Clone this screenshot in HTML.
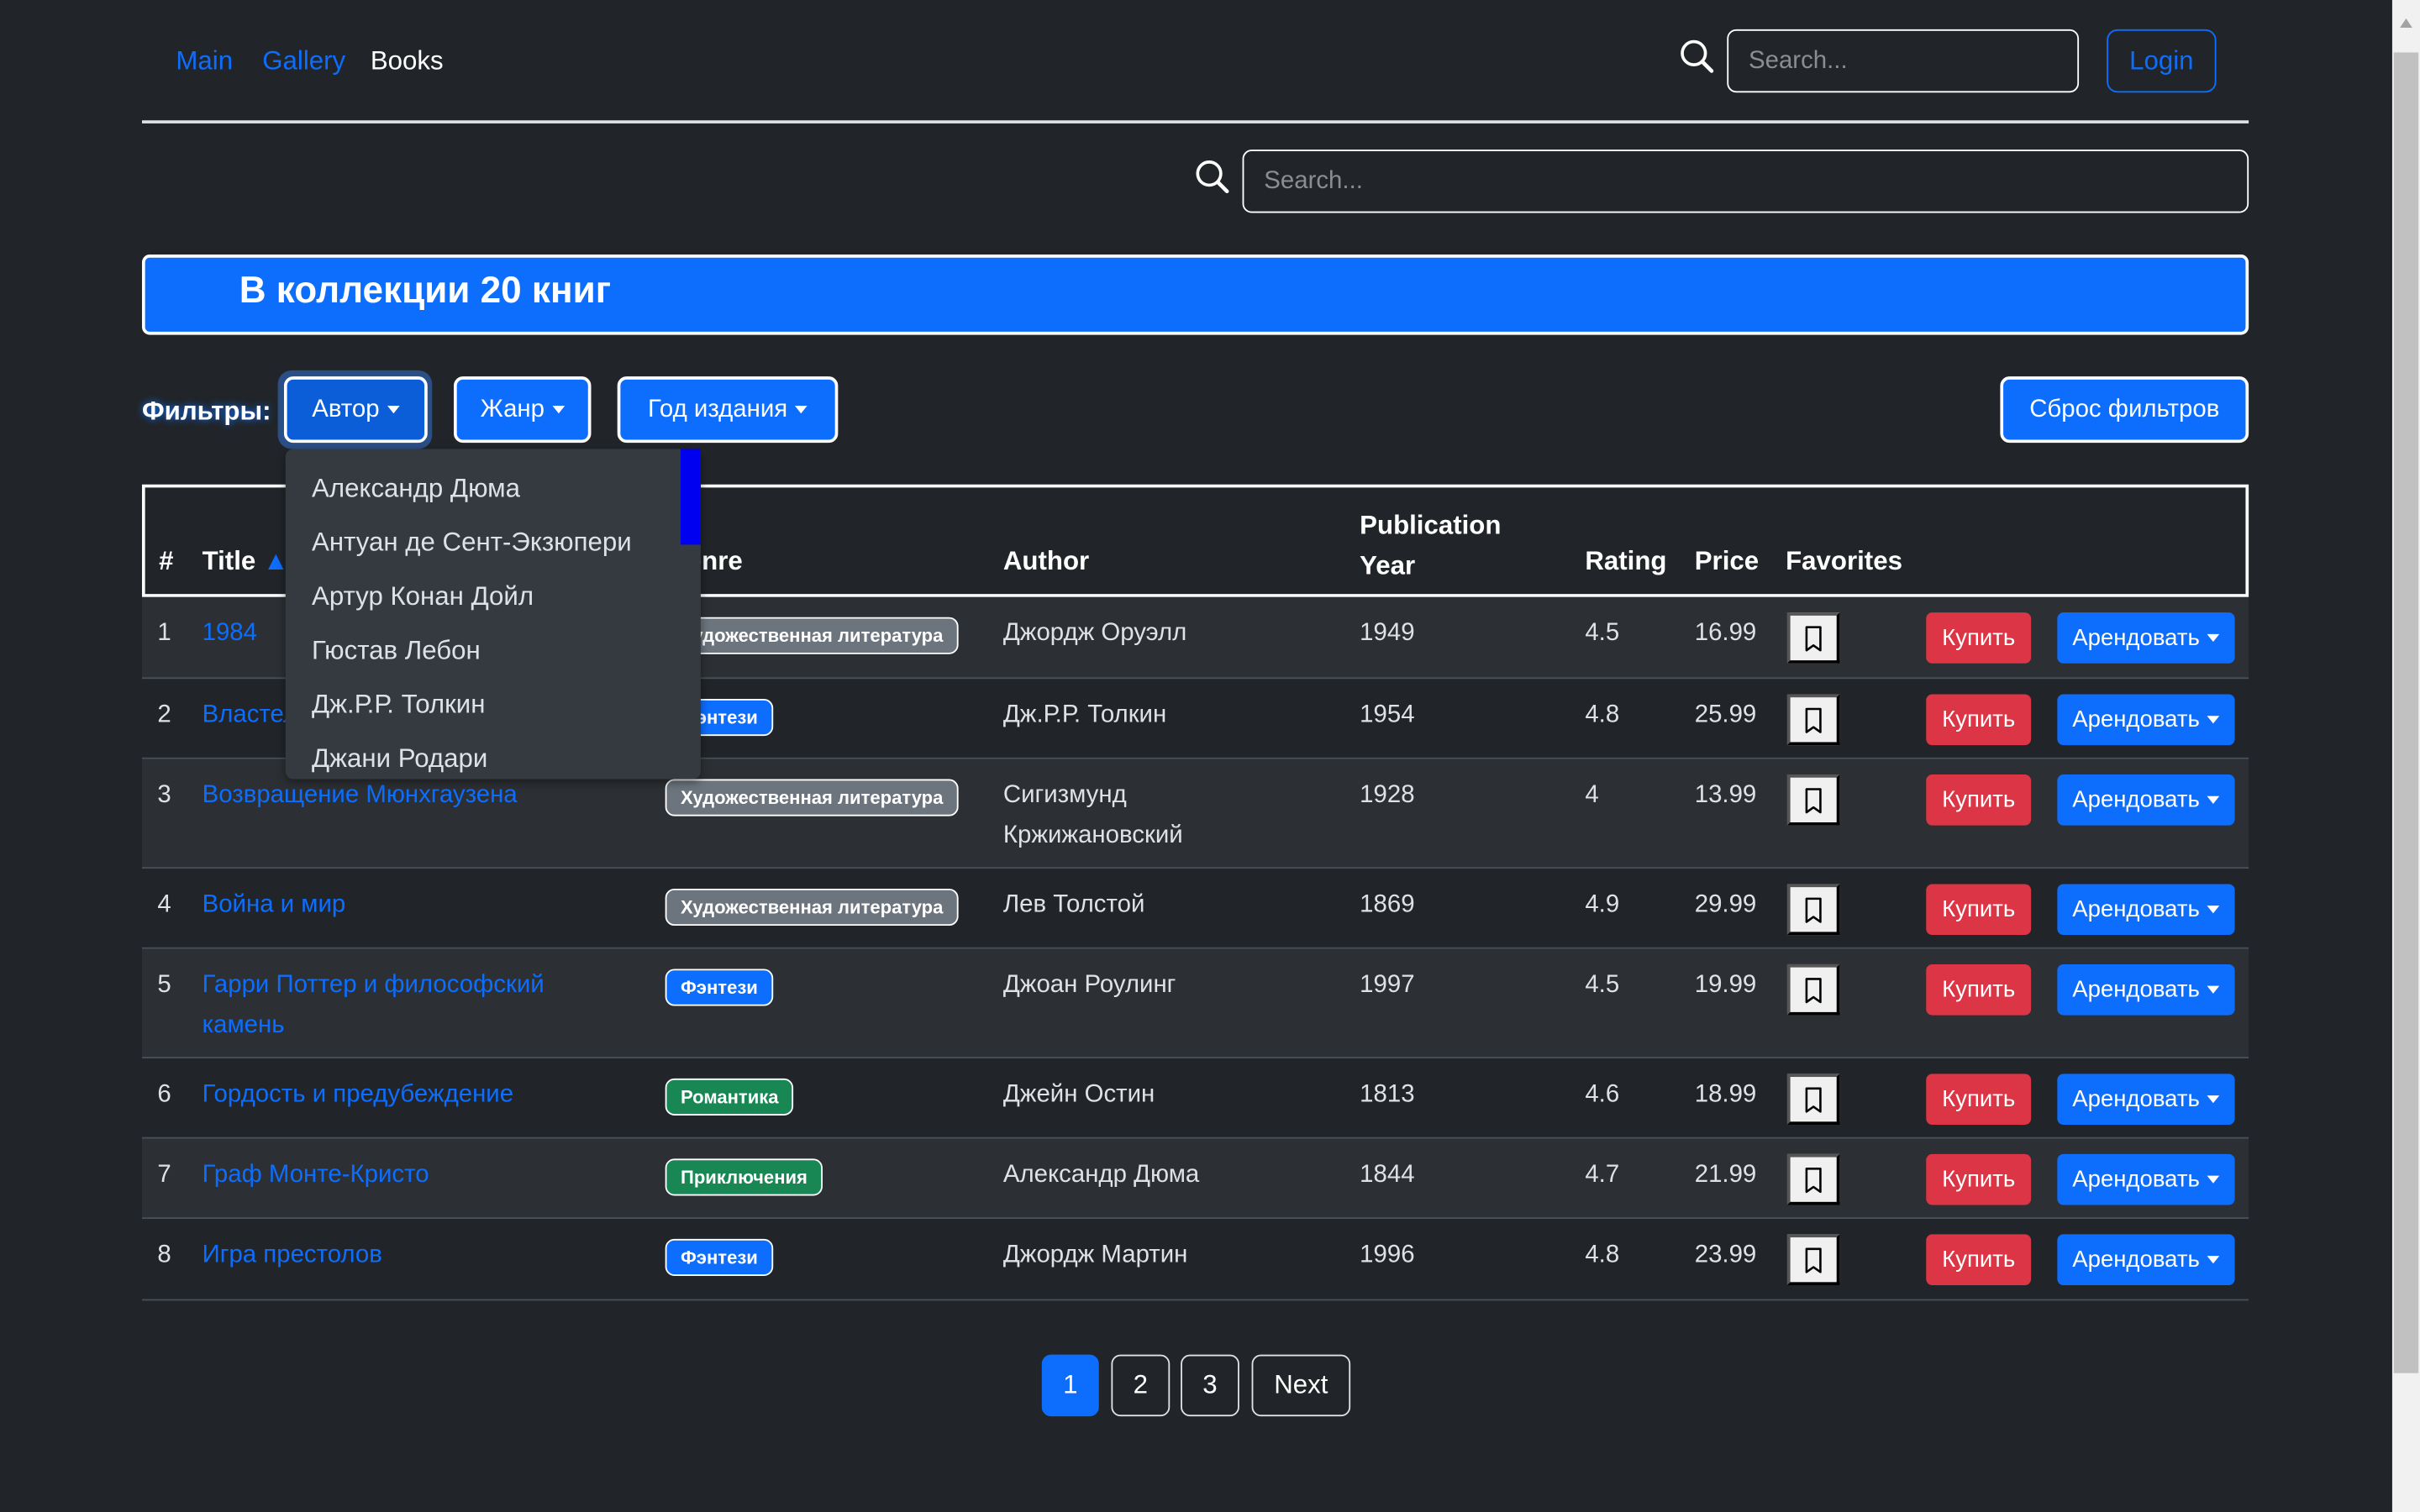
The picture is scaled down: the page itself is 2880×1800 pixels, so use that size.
<!DOCTYPE html>
<html><head><meta charset="utf-8"><style>
*{box-sizing:border-box;margin:0;padding:0}
html,body{width:2880px;height:1800px;overflow:hidden;background:#212529}
#w{width:1568px;height:980px;transform:scale(1.836735);transform-origin:0 0;position:relative;font-family:"Liberation Sans",sans-serif;font-size:16px;color:#dee2e6}
.a{position:absolute}
.lnk{color:#0d6efd}
.inp{position:absolute;border:1.5px solid #fff;border-radius:6px;background:#212529;color:#8a8d91;font-size:16px;padding-left:13px;display:flex;align-items:center}
.btn{position:absolute;background:#0d6efd;color:#fff;border:2px solid #fff;border-radius:6px;display:flex;align-items:center;justify-content:center;font-size:16px}
.car{display:inline-block;width:0;height:0;border-left:4.5px solid transparent;border-right:4.5px solid transparent;border-top:5px solid #fff;margin-left:5px;vertical-align:3px}
.row{position:absolute;left:92px;width:1365px;border-bottom:1px solid #495057}
.c{position:absolute;top:15px}
.badge{position:absolute;top:13px;left:339px;height:24px;border:1.5px solid #fff;border-radius:6px;color:#fff;font-weight:bold;font-size:12px;padding:0 9px;display:flex;align-items:center}
.bm{position:absolute;left:1066px;top:10px;width:34px;height:33px;background:#f0f0f0;border:2px solid;border-color:#555 #000 #000 #555;display:flex;align-items:center;justify-content:center}
.buy{position:absolute;left:1156px;top:10px;width:68px;height:33px;background:#dc3545;color:#fff;border-radius:4px;display:flex;align-items:center;justify-content:center;font-size:15px}
.rent{position:absolute;left:1241px;top:10px;width:115px;height:33px;background:#0d6efd;color:#fff;border-radius:4px;display:flex;align-items:center;justify-content:center;font-size:15px}
.pg{position:absolute;top:878px;height:40px;border:1px solid #dee2e6;border-radius:6px;display:flex;align-items:center;justify-content:center;color:#fff;font-size:17px}
.dd{position:absolute;left:202px;font-size:17px;color:#dee2e6}
</style></head><body><div id="w">
<svg width="0" height="0" style="position:absolute"><defs><symbol id="bk" viewBox="0 0 14 18"><path d="M2.5 1.5h9v15l-4.5-3.2-4.5 3.2z" fill="none" stroke="#000" stroke-width="1.4" stroke-linejoin="round"/></symbol></defs></svg>
<div class="a lnk" style="left:114px;top:30px;font-size:17px">Main</div>
<div class="a lnk" style="left:170px;top:30px;font-size:17px">Gallery</div>
<div class="a" style="left:240px;top:30px;font-size:17px;color:#fff">Books</div>
<svg class="a" style="left:1088px;top:25px" width="24" height="24" viewBox="0 0 24 24"><circle cx="9.5" cy="9.5" r="7.5" fill="none" stroke="#fff" stroke-width="2"/><path d="M15 15l6 6" stroke="#fff" stroke-width="2.5" stroke-linecap="round"/></svg>
<div class="inp" style="left:1119px;top:19px;width:228px;height:41px">Search...</div>
<div class="a" style="left:1365px;top:19px;width:71px;height:41px;border:1.5px solid #0d6efd;border-radius:7px;color:#0d6efd;display:flex;align-items:center;justify-content:center;font-size:17px">Login</div>
<div class="a" style="left:92px;top:78px;width:1365px;height:1.5px;background:#dee2e6"></div>
<svg class="a" style="left:774px;top:103px" width="24" height="24" viewBox="0 0 24 24"><circle cx="9.5" cy="9.5" r="7.5" fill="none" stroke="#fff" stroke-width="2"/><path d="M15 15l6 6" stroke="#fff" stroke-width="2.5" stroke-linecap="round"/></svg>
<div class="inp" style="left:805px;top:97px;width:652px;height:41px">Search...</div>
<div class="a" style="left:92px;top:165px;width:1365px;height:52px;background:#0d6efd;border:2px solid #fff;border-radius:5px;color:#fff;font-weight:bold;font-size:24px;padding-left:61px;line-height:44px">В коллекции 20 книг</div>
<div class="a" style="left:92px;top:257px;font-weight:bold;font-size:17px;color:#fff;text-shadow:0 0 5px #0d6efd">Фильтры:</div>
<div class="a" style="left:180px;top:240px;width:100px;height:51px;border-radius:9px;background:#2a4e86"></div>
<div class="btn" style="left:184px;top:244px;width:93px;height:43px;background:#0b5ed7">Автор<span class="car"></span></div>
<div class="btn" style="left:294px;top:244px;width:89px;height:43px">Жанр<span class="car"></span></div>
<div class="btn" style="left:400px;top:244px;width:143px;height:43px">Год издания<span class="car"></span></div>
<div class="btn" style="left:1296px;top:244px;width:161px;height:43px">Сброс фильтров</div>
<div class="a" style="left:92px;top:314px;width:1365px;height:73px;border:2px solid #fff"></div>
<div class="a" style="left:103px;top:354px;font-weight:bold;font-size:17px;color:#fff">#</div>
<div class="a" style="left:131px;top:354px;font-weight:bold;font-size:17px;color:#fff">Title <span style="color:#0d6efd">▲</span></div>
<div class="a" style="left:432px;top:354px;font-weight:bold;font-size:17px;color:#fff">Genre</div>
<div class="a" style="left:650px;top:354px;font-weight:bold;font-size:17px;color:#fff">Author</div>
<div class="a" style="left:881px;top:328px;font-weight:bold;font-size:17px;color:#fff;line-height:26px">Publication<br>Year</div>
<div class="a" style="left:1027px;top:354px;font-weight:bold;font-size:17px;color:#fff">Rating</div>
<div class="a" style="left:1098px;top:354px;font-weight:bold;font-size:17px;color:#fff">Price</div>
<div class="a" style="left:1157px;top:354px;font-weight:bold;font-size:17px;color:#fff">Favorites</div>

<div class="row" style="top:387px;height:53px;background:#2c3034"><div class="c" style="left:10px">1</div><div class="c lnk" style="left:39px">1984</div><div class="badge" style="background:#6c757d">Художественная литература</div><div class="c" style="left:558px">Джордж Оруэлл</div><div class="c" style="left:789px">1949</div><div class="c" style="left:935px">4.5</div><div class="c" style="left:1006px">16.99</div><div class="bm"><svg width="14" height="18"><use href="#bk"/></svg></div><div class="buy">Купить</div><div class="rent">Арендовать<span class="car"></span></div></div>
<div class="row" style="top:440px;height:52px"><div class="c" style="left:10px">2</div><div class="c lnk" style="left:39px">Властелин колец</div><div class="badge" style="background:#0d6efd">Фэнтези</div><div class="c" style="left:558px">Дж.Р.Р. Толкин</div><div class="c" style="left:789px">1954</div><div class="c" style="left:935px">4.8</div><div class="c" style="left:1006px">25.99</div><div class="bm"><svg width="14" height="18"><use href="#bk"/></svg></div><div class="buy">Купить</div><div class="rent">Арендовать<span class="car"></span></div></div>
<div class="row" style="top:492px;height:71px;background:#2c3034"><div class="c" style="left:10px">3</div><div class="c lnk" style="left:39px">Возвращение Мюнхгаузена</div><div class="badge" style="background:#6c757d">Художественная литература</div><div class="c" style="left:558px;line-height:26px;top:11px">Сигизмунд<br>Кржижановский</div><div class="c" style="left:789px">1928</div><div class="c" style="left:935px">4</div><div class="c" style="left:1006px">13.99</div><div class="bm"><svg width="14" height="18"><use href="#bk"/></svg></div><div class="buy">Купить</div><div class="rent">Арендовать<span class="car"></span></div></div>
<div class="row" style="top:563px;height:52px"><div class="c" style="left:10px">4</div><div class="c lnk" style="left:39px">Война и мир</div><div class="badge" style="background:#6c757d">Художественная литература</div><div class="c" style="left:558px">Лев Толстой</div><div class="c" style="left:789px">1869</div><div class="c" style="left:935px">4.9</div><div class="c" style="left:1006px">29.99</div><div class="bm"><svg width="14" height="18"><use href="#bk"/></svg></div><div class="buy">Купить</div><div class="rent">Арендовать<span class="car"></span></div></div>
<div class="row" style="top:615px;height:71px;background:#2c3034"><div class="c lnk" style="left:39px;line-height:26px;top:11px">Гарри Поттер и философский<br>камень</div><div class="c" style="left:10px">5</div><div class="badge" style="background:#0d6efd">Фэнтези</div><div class="c" style="left:558px">Джоан Роулинг</div><div class="c" style="left:789px">1997</div><div class="c" style="left:935px">4.5</div><div class="c" style="left:1006px">19.99</div><div class="bm"><svg width="14" height="18"><use href="#bk"/></svg></div><div class="buy">Купить</div><div class="rent">Арендовать<span class="car"></span></div></div>
<div class="row" style="top:686px;height:52px"><div class="c" style="left:10px">6</div><div class="c lnk" style="left:39px">Гордость и предубеждение</div><div class="badge" style="background:#198754">Романтика</div><div class="c" style="left:558px">Джейн Остин</div><div class="c" style="left:789px">1813</div><div class="c" style="left:935px">4.6</div><div class="c" style="left:1006px">18.99</div><div class="bm"><svg width="14" height="18"><use href="#bk"/></svg></div><div class="buy">Купить</div><div class="rent">Арендовать<span class="car"></span></div></div>
<div class="row" style="top:738px;height:52px;background:#2c3034"><div class="c" style="left:10px">7</div><div class="c lnk" style="left:39px">Граф Монте-Кристо</div><div class="badge" style="background:#198754">Приключения</div><div class="c" style="left:558px">Александр Дюма</div><div class="c" style="left:789px">1844</div><div class="c" style="left:935px">4.7</div><div class="c" style="left:1006px">21.99</div><div class="bm"><svg width="14" height="18"><use href="#bk"/></svg></div><div class="buy">Купить</div><div class="rent">Арендовать<span class="car"></span></div></div>
<div class="row" style="top:790px;height:53px"><div class="c" style="left:10px">8</div><div class="c lnk" style="left:39px">Игра престолов</div><div class="badge" style="background:#0d6efd">Фэнтези</div><div class="c" style="left:558px">Джордж Мартин</div><div class="c" style="left:789px">1996</div><div class="c" style="left:935px">4.8</div><div class="c" style="left:1006px">23.99</div><div class="bm"><svg width="14" height="18"><use href="#bk"/></svg></div><div class="buy">Купить</div><div class="rent">Арендовать<span class="car"></span></div></div>

<div class="pg" style="left:675px;width:37px;background:#0d6efd;border-color:#0d6efd">1</div>
<div class="pg" style="left:720px;width:38px">2</div>
<div class="pg" style="left:765px;width:38px">3</div>
<div class="pg" style="left:811px;width:64px">Next</div>

<div class="a" style="left:185px;top:291px;width:269px;height:214px;background:#343a40;border-radius:5px;box-shadow:0 2px 6px rgba(0,0,0,.4)"></div>
<div class="a" style="left:441px;top:291px;width:13px;height:62px;background:#0000f0"></div>
<div class="dd" style="top:307px">Александр Дюма</div>
<div class="dd" style="top:342px">Антуан де Сент-Экзюпери</div>
<div class="dd" style="top:377px">Артур Конан Дойл</div>
<div class="dd" style="top:412px">Гюстав Лебон</div>
<div class="dd" style="top:447px">Дж.Р.Р. Толкин</div>
<div class="dd" style="top:482px">Джани Родари</div>

<div class="a" style="left:1550px;top:0;width:18px;height:980px;background:#f1f1f1"></div>
<div class="a" style="left:1551px;top:34px;width:16px;height:856px;background:#c1c1c1"></div>
<div class="a" style="left:1555px;top:12px;width:0;height:0;border-left:4px solid transparent;border-right:4px solid transparent;border-bottom:6px solid #a3a3a3"></div>
</div></body></html>
